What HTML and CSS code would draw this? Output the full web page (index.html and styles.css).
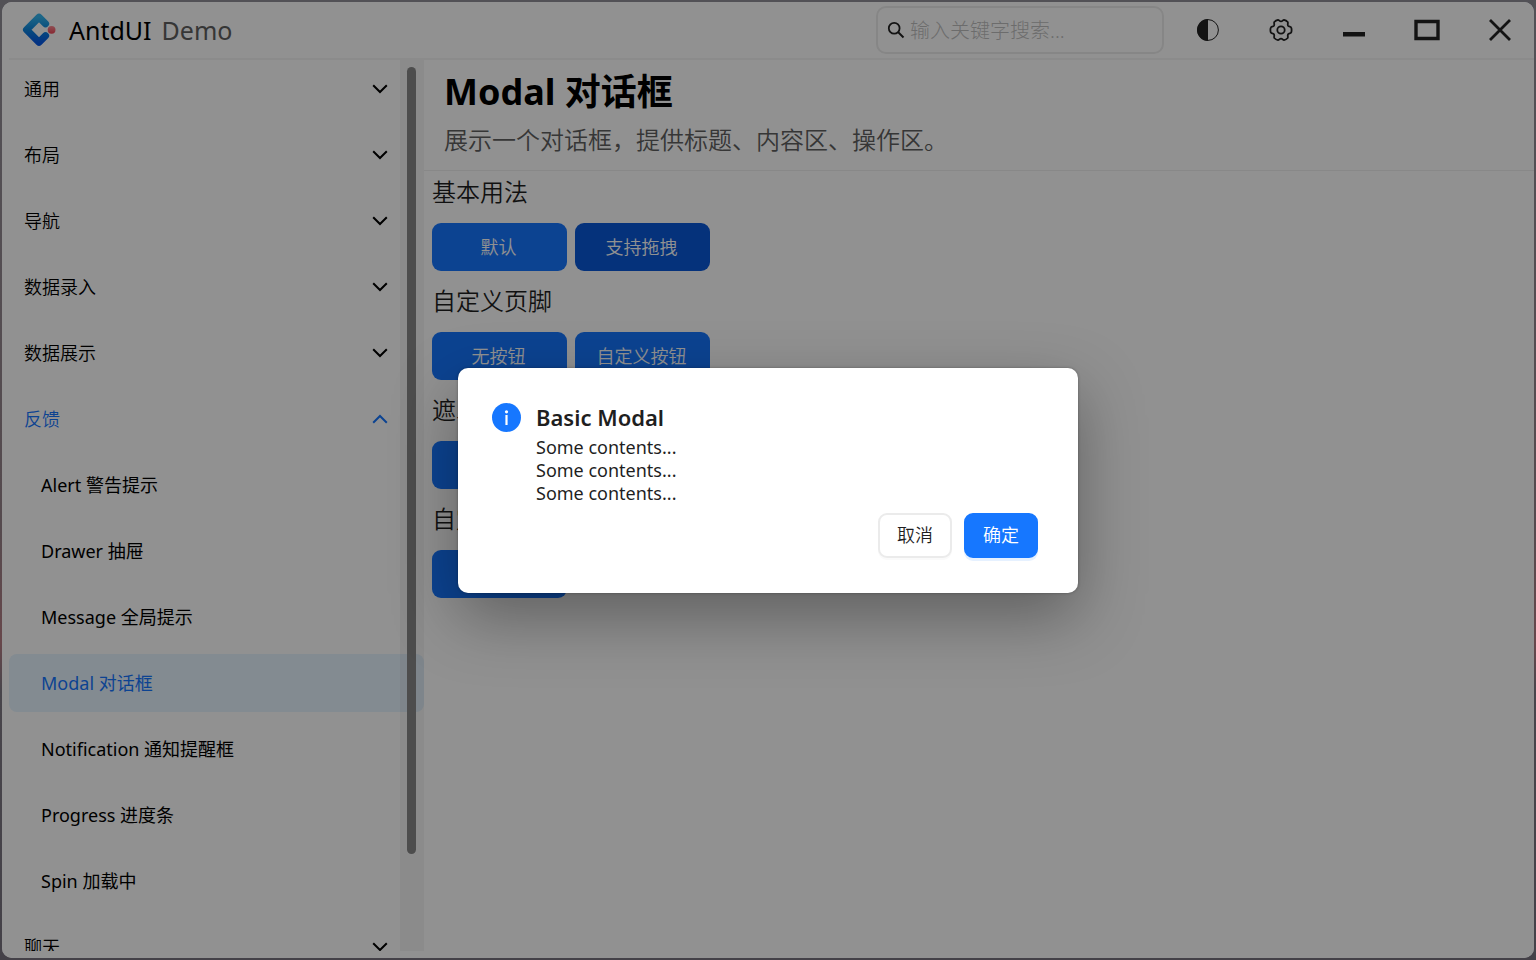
FILE: index.html
```html
<!DOCTYPE html>
<html lang="zh-CN">
<head>
<meta charset="utf-8">
<title>AntdUI Demo</title>
<link rel="stylesheet" href="styles.css">
</head>
<body>
<svg width="0" height="0" class="defs" aria-hidden="true">
  <symbol id="chevron" viewBox="0 0 16 16"><path d="M1.2 4.2 8 11l6.800-6.800" fill="none" stroke="currentColor" stroke-width="2"/></symbol>
</svg>
<div class="window">
  <header class="titlebar">
    <svg class="logo" viewBox="0 0 34 34" aria-hidden="true">
      <defs><linearGradient id="blue" x1="0" y1="0" x2="0" y2="1"><stop offset="0" stop-color="#35b4ee"/><stop offset=".5" stop-color="#0e86dc"/><stop offset="1" stop-color="#0759e6"/></linearGradient>
      <linearGradient id="red" x1="0" y1="0" x2="0" y2="1"><stop offset="0" stop-color="#fa8a92"/><stop offset="1" stop-color="#f0485a"/></linearGradient></defs>
      <path d="M23.500 10.700 17 4.200 4.600 16.700 17 29.200 23.500 22.700" fill="none" stroke="url(#blue)" stroke-width="7.200" stroke-linejoin="round" stroke-linecap="round"/>
      <circle cx="29.600" cy="16.800" r="3.900" fill="url(#red)"/>
    </svg>
    <span class="app-name">AntdUI</span>
    <span class="app-sub">Demo</span>
    <label class="search">
      <svg viewBox="0 0 18 18" aria-hidden="true"><circle cx="7.200" cy="7.200" r="5.400" fill="none" stroke="currentColor" stroke-width="1.800"/><path d="M11 11l5.500 5.500" stroke="currentColor" stroke-width="2"/></svg>
      <input type="text" aria-label="搜索" placeholder="输入关键字搜索...">
    </label>
    <div class="tools">
      <button class="tool" aria-label="主题"><svg viewBox="0 0 24 24"><circle cx="12" cy="12" r="10.400" fill="none" stroke="currentColor"/><path d="M12 1a11 11 0 0 0 0 22z" fill="currentColor"/></svg></button>
      <button class="tool" aria-label="设置"><svg viewBox="0 0 24 24" fill="none" stroke="currentColor" stroke-width="1.800" stroke-linejoin="round"><circle cx="12" cy="12" r="3.700"/><path d="M12 3.400C13.600 3.400 13.700 1.900 15 1.900Q17.200 2.400 18.700 4C19.300 5.200 18.300 6.100 19 7.700C20 9 22 8.300 22.300 9.700Q22.900 12 22.300 14.300C22 15.700 20 15 19 16.300C18.300 17.900 19.300 18.800 18.700 20Q17.200 21.600 15 22.100C13.700 22.100 13.600 20.600 12 20.600C10.400 20.600 10.300 22.100 9 22.100Q6.800 21.600 5.300 20C4.700 18.800 5.700 17.900 5 16.300C4 15 2 15.700 1.700 14.300Q1.100 12 1.700 9.700C2 8.300 4 9 5 7.700C5.700 6.100 4.700 5.200 5.300 4Q6.800 2.400 9 1.900C10.300 1.900 10.400 3.400 12 3.400Z"/></svg></button>
      <button class="tool" aria-label="最小化"><svg viewBox="0 0 24 24"><path d="M1 14h22v4.500H1z" fill="currentColor"/></svg></button>
      <button class="tool" aria-label="最大化"><svg class="wide" viewBox="0 0 26 24"><path d="M2 3.500h22v17H2z" fill="none" stroke="currentColor" stroke-width="3.400"/></svg></button>
      <button class="tool" aria-label="关闭"><svg viewBox="0 0 24 24"><path d="M2 2l20 20M22 2L2 22" stroke="currentColor" stroke-width="2.800"/></svg></button>
    </div>
  </header>
  <div class="body">
    <nav class="sidebar">
      <ul class="menu">
        <li><a class="item" href="#">通用<svg><use href="#chevron"/></svg></a></li>
        <li><a class="item" href="#">布局<svg><use href="#chevron"/></svg></a></li>
        <li><a class="item" href="#">导航<svg><use href="#chevron"/></svg></a></li>
        <li><a class="item" href="#">数据录入<svg><use href="#chevron"/></svg></a></li>
        <li><a class="item" href="#">数据展示<svg><use href="#chevron"/></svg></a></li>
        <li><a class="item open" href="#">反馈<svg><use href="#chevron"/></svg></a></li>
        <li><a class="item sub" href="#">Alert 警告提示</a></li>
        <li><a class="item sub" href="#">Drawer 抽屉</a></li>
        <li><a class="item sub" href="#">Message 全局提示</a></li>
        <li><a class="item sub selected" href="#">Modal 对话框</a></li>
        <li><a class="item sub" href="#">Notification 通知提醒框</a></li>
        <li><a class="item sub" href="#">Progress 进度条</a></li>
        <li><a class="item sub" href="#">Spin 加载中</a></li>
        <li><a class="item" href="#">聊天<svg><use href="#chevron"/></svg></a></li>
      </ul>
      <div class="scrollbar"><div class="thumb"></div></div>
    </nav>
    <main class="content">
      <div class="page-head">
        <h1>Modal 对话框</h1>
        <p>展示一个对话框，提供标题、内容区、操作区。</p>
      </div>
      <section><h2>基本用法</h2><div class="row"><button class="demo">默认</button><button class="demo active">支持拖拽</button></div></section>
      <section><h2>自定义页脚</h2><div class="row"><button class="demo">无按钮</button><button class="demo">自定义按钮</button></div></section>
      <section><h2>遮罩</h2><div class="row"><button class="demo" aria-label="遮罩"></button></div></section>
      <section><h2>自定义</h2><div class="row"><button class="demo" aria-label="自定义"></button></div></section>
    </main>
  </div>
  <div class="mask">
    <div class="modal" role="dialog" aria-modal="true" aria-labelledby="modal-title">
      <svg class="info" viewBox="0 0 30 30" aria-hidden="true"><circle cx="14.500" cy="14.500" r="14.500" fill="#1677ff"/><circle cx="14.500" cy="8.800" r="1.600" fill="#fff"/><path d="M14.500 12v10" stroke="#fff" stroke-width="2.200"/></svg>
      <div class="modal-body">
        <h3 id="modal-title">Basic Modal</h3>
        <p>Some contents...<br>Some contents...<br>Some contents...</p>
        <div class="actions"><button class="btn">取消</button><button class="btn primary">确定</button></div>
      </div>
    </div>
  </div>
</div>
</body>
</html>
```
FILE: styles.css
```css
* { box-sizing: border-box; }
body {
  margin: 0;
  height: 100vh;
  padding: 2px;
  background: linear-gradient(#525156, #554a4e 55%, #67474b 67%, #48454b 72%, #444148);
  font-family: "Noto Sans", "Noto Sans CJK SC", sans-serif;
  font-size: 18px;
  font-weight: 350;
  color: #000;
}
.defs { position: absolute; }
h1, h2, h3, p, ul { margin: 0; padding: 0; }
button, input { font: inherit; }
button { border: 0; padding: 0; background: none; cursor: pointer; }
.window {
  position: relative;
  height: 100%;
  display: flex;
  flex-direction: column;
  padding: 0 0 7px 7px;
  background: #fff;
  border-radius: 10px;
  overflow: hidden;
}
.titlebar {
  flex: none;
  display: flex;
  align-items: center;
  height: 58px;
  padding-left: 13px;
  border-bottom: 2px solid #f4f4f4;
}
.logo { width: 34px; height: 34px; }
.app-name { margin-left: 13px; font-size: 25px; font-weight: 400; }
.app-sub { margin-left: 10px; font-size: 25px; font-weight: 400; color: #606060; }
.search {
  display: flex;
  align-items: center;
  gap: 5px;
  width: 288px;
  height: 48px;
  margin-left: auto;
  padding: 0 9px;
  border: 2px solid #ececec;
  border-radius: 10px;
  color: #222;
}
.search svg { flex: none; width: 18px; height: 18px; }
.search input {
  flex: 1;
  min-width: 0;
  padding: 0;
  border: 0;
  outline: 0;
  background: none;
  font-size: 20px;
  font-weight: 300;
}
.search input::placeholder { color: #bfbfbf; opacity: 1; }
.tools { display: flex; margin: 0 -2px 0 7px; }
.tool { display: grid; place-items: center; width: 73px; height: 56px; color: #222; }
.tool svg { width: 24px; height: 24px; }
.tool svg.wide { width: 26px; }
.body { flex: 1; min-height: 0; display: flex; }
.sidebar { position: relative; flex: none; width: 415px; overflow: hidden; }
.menu { display: flex; flex-direction: column; gap: 8px; list-style: none; }
.item {
  display: flex;
  align-items: center;
  justify-content: space-between;
  height: 58px;
  padding: 0 36px 2px 15px;
  border-radius: 8px;
  color: #000;
  text-decoration: none;
}
.item svg { width: 16px; height: 16px; margin-top: 2px; }
.item.open { color: #1677ff; }
.item.open svg { transform: rotate(180deg); }
.item.sub { padding-left: 32px; font-weight: 400; }
.item.selected { background: #e6f4ff; color: #1677ff; }
.scrollbar {
  position: absolute;
  top: 0;
  right: 0;
  bottom: 0;
  width: 24px;
  padding: 7px 8px 0 7px;
  background: rgba(0, 0, 0, .04);
}
.thumb { height: 89%; border-radius: 5px; background: #888; }
.content { flex: 1; min-width: 0; }
.page-head { height: 111px; padding: 6px 20px 0; border-bottom: 1px solid #f0f0f0; margin-bottom: 3px; }
.page-head h1 { font-size: 36px; line-height: 52px; font-weight: 700; }
.page-head p { font-size: 24px; line-height: 44px; color: #606060; }
section { padding-left: 8px; margin-bottom: 12px; }
section h2 { margin-bottom: 13px; font-size: 24px; line-height: 36px; font-weight: 350; color: #1f1f1f; }
.row { display: flex; gap: 8px; }
.demo { width: 135px; height: 48px; padding: 0 2px 2px 0; border-radius: 9px; background: #1677ff; color: #fff; }
.demo.active { background: #0958d9; }
.mask {
  position: absolute;
  inset: 0;
  display: grid;
  place-items: center;
  background: rgba(0, 0, 0, .43);
}
.modal {
  display: flex;
  gap: 14px;
  width: 620px;
  padding: 35px 40px 35px 34px;
  border-radius: 10px;
  background: #fff;
  color: #1f1f1f;
  box-shadow: 0 24px 64px rgba(0, 0, 0, .34), 0 0 3px rgba(0, 0, 0, .3);
}
.info { flex: none; width: 30px; height: 30px; }
.modal-body { flex: 1; }
.modal h3 { font-size: 22px; line-height: 28px; font-weight: 600; }
.modal p { margin-top: 5px; font-size: 18px; line-height: 23px; font-weight: 400; }
.actions { display: flex; justify-content: flex-end; gap: 12px; margin-top: 8px; }
.btn {
  width: 74px;
  height: 45px;
  padding-bottom: 3px;
  border: 2px solid #ebebeb;
  border-radius: 9px;
  background: #fff;
  color: #1f1f1f;
  box-shadow: 0 2px 0 #fafafa;
}
.btn.primary { border-color: #1677ff; background: #1677ff; color: #fff; box-shadow: 0 3px 0 #e6f1ff; }
```
